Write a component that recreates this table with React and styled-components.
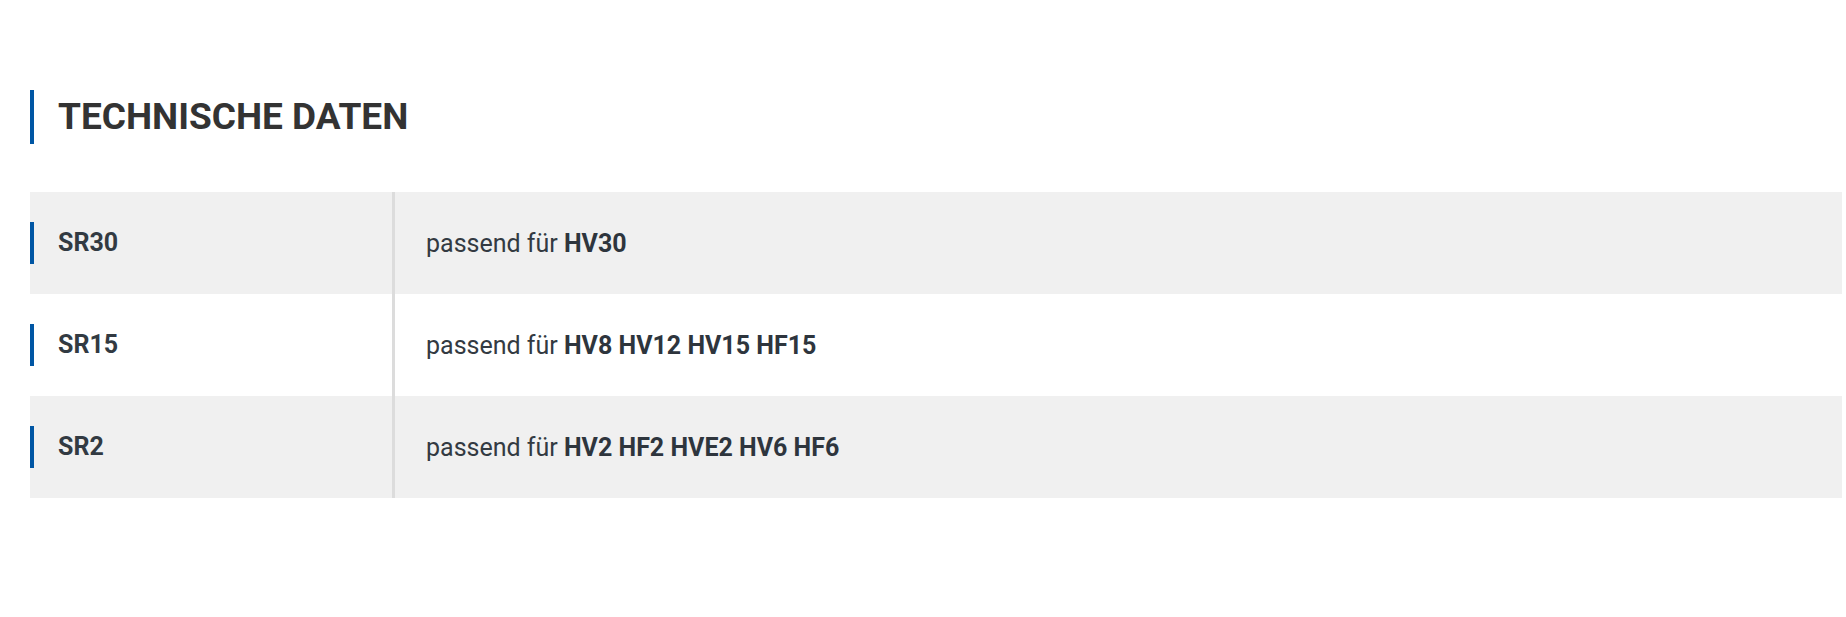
import React from "react";
import styled, { createGlobalStyle } from "styled-components";

const Global = createGlobalStyle`
  html, body { margin: 0; padding: 0; background: #fff; }
  body { font-family: Roboto, "Noto Sans", Arial, sans-serif; color: #333; }
`;

const Page = styled.section`
  padding: 90px 4px 0 30px;
`;

const Heading = styled.h2`
  margin: 0 0 48px;
  border-left: 4px solid #0056a4;
  padding-left: 24px;
  font-size: 37px;
  line-height: 54px;
  font-weight: 700;
  color: #333;
  text-transform: uppercase;
`;

const Table = styled.div`
  display: grid;
  grid-template-columns: 362px 1fr;
`;

const Row = styled.div`
  display: contents;
`;

const LabelCell = styled.div`
  height: 102px;
  display: flex;
  align-items: center;
  background: ${(p) => (p.$shaded ? "#f0f0f0" : "#fff")};
`;

const Label = styled.span`
  border-left: 4px solid #0056a4;
  padding-left: 24px;
  line-height: 42px;
  font-size: 25px;
  font-weight: 700;
  color: #323a42;
`;

const ValueCell = styled.div`
  height: 102px;
  display: flex;
  align-items: center;
  padding-left: 31px;
  border-left: 3px solid #dcdcdc;
  background: ${(p) => (p.$shaded ? "#f0f0f0" : "#fff")};
  font-size: 25px;
  color: #333a42;
`;

const Strong = styled.strong`
  font-weight: 700;
  color: #2e353d;
`;

const rows = [
  { label: "SR30", models: "HV30" },
  { label: "SR15", models: "HV8 HV12 HV15 HF15" },
  { label: "SR2", models: "HV2 HF2 HVE2 HV6 HF6" },
];

export default function App() {
  return (
    <>
      <Global />
      <Page>
        <Heading>Technische Daten</Heading>
        <Table>
          {rows.map((r, i) => (
            <Row key={r.label}>
              <LabelCell $shaded={i % 2 === 0}>
                <Label>{r.label}</Label>
              </LabelCell>
              <ValueCell $shaded={i % 2 === 0}>
                <span>
                  passend für <Strong>{r.models}</Strong>
                </span>
              </ValueCell>
            </Row>
          ))}
        </Table>
      </Page>
    </>
  );
}
